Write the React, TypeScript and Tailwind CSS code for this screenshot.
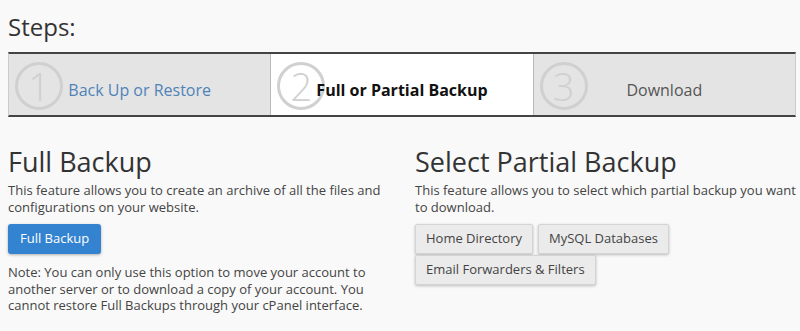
import React from 'react';

const steps = [
  { n: 1, label: 'Back Up or Restore', state: 'done' },
  { n: 2, label: 'Full or Partial Backup', state: 'current' },
  { n: 3, label: 'Download', state: 'todo' },
];

export default function App() {
  return (
    <div
      className="min-h-screen w-[800px] h-[331px] overflow-hidden bg-[#f9f9f9] pl-2 text-[#333]"
      style={{ fontFamily: '"Open Sans", "Liberation Sans", sans-serif' }}
    >
      <h1 className="pt-[11px] text-[24px] leading-[32px] text-[#333]">Steps:</h1>

      {/* step bar */}
      <div className="mt-[9px] flex w-[788px] border-y-2 border-[#444] border-x border-x-[#ccc]">
        {steps.map((s, i) => (
          <div
            key={s.n}
            className={`relative flex h-[61px] flex-1 items-center justify-center pt-[10px] ${
              i > 0 ? 'border-l border-[#bbb]' : ''
            } ${s.state === 'current' ? 'bg-white' : 'bg-[#e4e4e4]'}`}
          >
            <div className="absolute left-[6px] top-[8px] flex h-[48px] w-[48px] items-center justify-center rounded-full border-[3px] border-[#d0d0d0] text-[38px] font-light leading-none text-[#d0d0d0]">
              {s.n}
            </div>
            <span
              className={`relative text-[16px] ${
                s.state === 'done'
                  ? 'text-[#4f83b8]'
                  : s.state === 'current'
                  ? 'font-bold text-[#111]'
                  : 'text-[#555]'
              }`}
            >
              {s.label}
            </span>
          </div>
        ))}
      </div>

      <div className="mt-[27px] grid grid-cols-[377px_385px] gap-x-[30px]">
        <div>
          <h2 className="text-[27px] leading-[36px] text-[#333]">Full Backup</h2>
          <p className="mt-[2px] text-[13px] leading-[17px] text-[#444]">
            This feature allows you to create an archive of all the files and configurations on your website.
          </p>
          <button className="mt-[8px] h-[30px] rounded-[3px] bg-[#3383d0] px-[12px] text-[13px] text-white shadow-[0_1px_3px_rgba(0,0,0,0.3)]">
            Full Backup
          </button>
          <p className="mt-[10px] text-[13px] leading-[16.5px] text-[#444]">
            Note: You can only use this option to move your account to another server or to download a copy of your
            account. You cannot restore Full Backups through your cPanel interface.
          </p>
        </div>
        <div>
          <h2 className="text-[27px] leading-[36px] text-[#333]">Select Partial Backup</h2>
          <p className="mt-[2px] text-[13px] leading-[17px] text-[#444]">
            This feature allows you to select which partial backup you want to download.
          </p>
          <div className="mt-[8px] flex w-[260px] flex-wrap gap-x-[5px] gap-y-[1px]">
            {['Home Directory', 'MySQL Databases', 'Email Forwarders & Filters'].map((b) => (
              <button
                key={b}
                className="h-[30px] rounded-[2px] border border-[#d4d4d4] bg-[#ebebeb] px-[10px] text-[13px] text-[#444] shadow-[0_1px_3px_rgba(0,0,0,0.25)]"
              >
                {b}
              </button>
            ))}
          </div>
        </div>
      </div>
    </div>
  );
}
